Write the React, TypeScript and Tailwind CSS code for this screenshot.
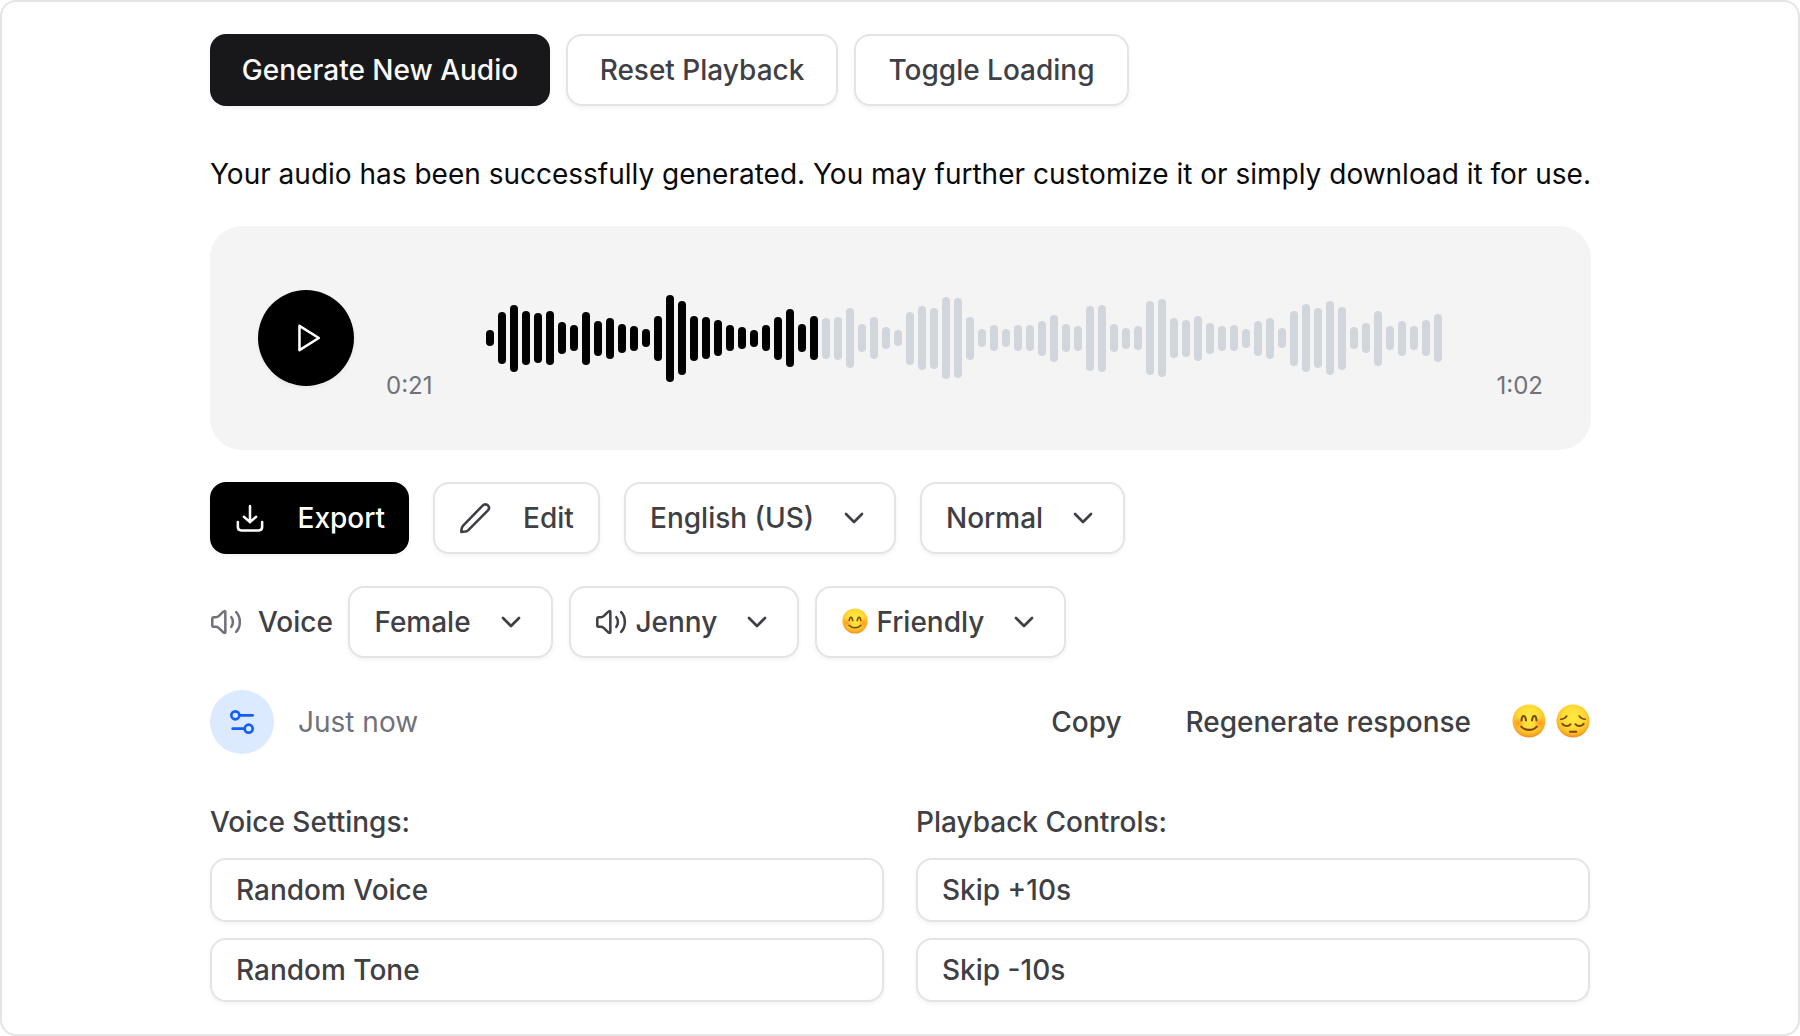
import React from "react";

const BARS: [number, number][] = [
  [50, 16], [32, 52], [25, 67], [31, 54], [33, 50], [31, 54], [42, 32], [45, 26], [32, 53], [41, 35],
  [38, 41], [44, 29], [46, 25], [49, 18], [36, 45], [15, 87], [21, 74], [36, 45], [37, 42], [40, 36],
  [45, 26], [47, 22], [50, 17], [45, 26], [37, 43], [29, 58], [44, 28], [36, 44], [38, 41], [37, 43],
  [28, 60], [44, 28], [37, 42], [47, 22], [50, 16], [32, 53], [26, 64], [28, 61], [17, 82], [18, 80],
  [37, 43], [49, 18], [45, 26], [49, 18], [45, 26], [45, 26], [41, 35], [35, 47], [44, 28], [46, 25],
  [26, 65], [25, 67], [44, 28], [48, 21], [46, 24], [21, 74], [19, 78], [38, 40], [40, 37], [36, 45],
  [43, 31], [46, 25], [45, 26], [49, 19], [41, 35], [38, 41], [48, 20], [31, 55], [24, 68], [28, 60],
  [21, 74], [27, 63], [47, 22], [43, 30], [31, 55], [46, 24], [41, 35], [46, 24], [40, 36], [34, 48],
];
const PLAYED = 28;

function Waveform() {
  return (
    <svg width="956" height="116" viewBox="0 0 956 116" className="block shrink-0">
      {BARS.map(([y, h], i) => (
        <rect key={i} x={i * 12} y={y} width="8" height={h} rx="4" fill={i < PLAYED ? "#000000" : "#d1d5dc"} />
      ))}
    </svg>
  );
}

type IconProps = { className?: string; stroke?: number; children: React.ReactNode };

function Icon({ className = "", stroke = 1.9, children }: IconProps) {
  return (
    <svg
      width="32"
      height="32"
      viewBox="0 0 24 24"
      fill="none"
      stroke="currentColor"
      strokeWidth={stroke}
      strokeLinecap="round"
      strokeLinejoin="round"
      className={"block shrink-0 " + className}
    >
      {children}
    </svg>
  );
}

function Volume({ className = "" }: { className?: string }) {
  return (
    <Icon className={className}>
      <path d="M1.7 9.8C1.7 8.9 2.2 8.4 2.9 8.4H4.3C5.2 8.4 5.8 8.2 6.5 7.6L9.2 5C10.2 4 11.5 3.1 11.5 4.7V19.3C11.5 20.9 10.2 20 9.2 19L6.5 16.4C5.8 15.8 5.2 15.6 4.3 15.6H2.9C2.2 15.6 1.7 15.1 1.7 14.2Z" />
      <path d="M16 8.4C17.6 10.4 17.6 13.6 16 15.6" />
      <path d="M19.6 4.6C23.3 8.4 23.3 15.6 19.6 19.4" />
    </Icon>
  );
}

function Chevron() {
  return (
    <Icon stroke={2} className="ml-6">
      <path d="M6 9L12 15L18 9" />
    </Icon>
  );
}

function Emoji({ size, sad = false }: { size: number; sad?: boolean }) {
  const id = (sad ? "sad" : "happy") + size;
  return (
    <svg width={size} height={size} viewBox="0 0 34 34" className="block shrink-0" fill="none" strokeLinecap="round">
      <defs>
        <radialGradient id={id} cx="0.5" cy="0.38" r="0.64">
          <stop offset="0" stopColor="#ffe93f" />
          <stop offset="0.5" stopColor="#ffdc38" />
          <stop offset="0.8" stopColor="#fcb825" />
          <stop offset="1" stopColor="#ea841a" />
        </radialGradient>
        <radialGradient id={id + "c"}>
          <stop offset="0" stopColor="#ff7a1a" stopOpacity="0.65" />
          <stop offset="1" stopColor="#ff7a1a" stopOpacity="0" />
        </radialGradient>
      </defs>
      <circle cx="17" cy="17" r="16.5" fill={"url(#" + id + ")"} />
      {sad ? (
        <g stroke="#7a4a0c" strokeWidth="1.6">
          <path d="M4.7 15.2C7.5 15 9.6 13.7 10.8 12" />
          <path d="M29.3 15.2C26.5 15 24.4 13.7 23.2 12" />
          <path d="M6.3 19.8C8 22.8 12.6 22.8 14.6 20.2" strokeWidth="2" />
          <path d="M27.7 19.8C26 22.8 21.4 22.8 19.4 20.2" strokeWidth="2" />
          <path d="M14 27.8H20.3" strokeWidth="2" />
        </g>
      ) : (
        <g>
          <circle cx="6.5" cy="19" r="6" fill={"url(#" + id + "c)"} />
          <circle cx="27.5" cy="19" r="6" fill={"url(#" + id + "c)"} />
          <g stroke="#7a4a0c" strokeWidth="2.1">
            <path d="M9.5 16.4C10 10.6 13.2 10.6 14 16.4" />
            <path d="M20 16.4C20.8 10.6 24 10.6 24.5 16.4" />
            <path d="M9.2 22.6C13 27 21 27 24.8 22.6" />
          </g>
        </g>
      )}
    </svg>
  );
}

const OUTLINE = "flex items-center border-2 border-[#e4e4e4] bg-white shadow-[0_2px_4px_rgba(0,0,0,0.05)]";

function Select({ width, children }: { width: string; children: React.ReactNode }) {
  return <button className={OUTLINE + " h-[72px] rounded-[16px] pl-6 " + width}>{children}<Chevron /></button>;
}

function Setting({ title, items }: { title: string; items: string[] }) {
  return (
    <section className="flex w-[674px] flex-col gap-4">
      <h3 className="h-10 font-medium">{title}</h3>
      {items.map((t) => (
        <button key={t} className={OUTLINE + " h-16 rounded-[16px] px-6"}>{t}</button>
      ))}
    </section>
  );
}

export default function App() {
  return (
    <main className="h-[1036px] w-[1800px] overflow-hidden rounded-[16px] border-2 border-[#e4e4e4] bg-white pt-8 pr-[207px] pl-[208px] font-['Inter',sans-serif] text-[28px] leading-10 font-medium whitespace-nowrap text-[#3f3f46] [font-variation-settings:'opsz'_14]">
      <div className="flex gap-4">
        <button className="h-[72px] w-[340px] rounded-[16px] bg-[#18181b] text-[#fafafa] shadow-[0_2px_4px_rgba(0,0,0,0.05)]">Generate New Audio</button>
        <button className={OUTLINE + " h-[72px] w-[272px] justify-center rounded-[16px]"}>Reset Playback</button>
        <button className={OUTLINE + " h-[72px] w-[275px] justify-center rounded-[16px]"}>Toggle Loading</button>
      </div>

      <p className="mt-12 font-normal text-[#09090b]">Your audio has been successfully generated. You may further customize it or simply download it for use.</p>

      <div className="mt-8 flex h-56 items-center rounded-[32px] bg-[#f4f4f4] px-12">
        <button className="flex size-24 shrink-0 items-center justify-center rounded-full bg-black text-white shadow-[0_2px_4px_rgba(0,0,0,0.05)]">
          <Icon><path d="M7.1 2.9L21.6 12L7.1 21.1Z" /></Icon>
        </button>
        <span className="mt-24 ml-8 w-[100px] text-2xl font-normal text-[#71717a]">0:21</span>
        <Waveform />
        <span className="mt-24 ml-auto text-2xl font-normal text-[#71717a]">1:02</span>
      </div>

      <div className="mt-8 flex gap-6">
        <button className="flex h-[72px] w-[199px] items-center rounded-[16px] bg-black pl-6 text-white shadow-[0_2px_4px_rgba(0,0,0,0.05)]">
          <Icon>
            <path d="M12 15.1V3.1M12 15.1L7.4 11.1M12 15.1L16.6 11.1" />
            <path d="M2.9 15V18.8C2.9 20.6 3.6 21.3 5.4 21.3H18.6C20.4 21.3 21.1 20.6 21.1 18.8V15" />
          </Icon>
          <span className="ml-[31.5px]">Export</span>
        </button>
        <button className={OUTLINE + " h-[72px] w-[167px] rounded-[16px] pl-6"}>
          <Icon>
            <path d="M3.3 17.5L17.7 2.7C18.9 1.5 20.7 1.5 21.7 2.6C22.7 3.7 22.7 5.3 21.5 6.5L7 21.1C6.3 21.8 5.7 22 4.9 22.1L1.7 22.4L2 19.9C2.2 18.9 2.5 18.3 3.3 17.5Z" />
          </Icon>
          <span className="ml-8">Edit</span>
        </button>
        <Select width="w-[272px]">English (US)</Select>
        <Select width="w-[205px]">Normal</Select>
      </div>

      <div className="mt-8 flex items-center gap-4">
        <Volume className="text-[#71717a]" />
        <span className="w-[74.4px]">Voice</span>
        <Select width="w-[205px]">Female</Select>
        <Select width="w-[230px]"><Volume className="mr-2" />Jenny</Select>
        <Select width="w-[251px]"><span className="mr-2 mb-0.5 ml-px"><Emoji size={26} /></span>Friendly</Select>
      </div>

      <div className="mt-8 flex h-16 items-center">
        <div className="flex size-16 items-center justify-center rounded-full bg-[#dbeafe] text-[#155dfc]">
          <Icon stroke={2}>
            <circle cx="7" cy="7" r="3" />
            <circle cx="17" cy="17" r="3" />
            <path d="M10 7H20M14 17H5" />
          </Icon>
        </div>
        <span className="ml-6 font-normal text-[#71717a]">Just now</span>
        <button className="ml-auto">Copy</button>
        <button className="ml-16">Regenerate response</button>
        <div className="mr-px mb-0.5 ml-[41px] flex gap-2.5"><Emoji size={34} /><Emoji size={34} sad /></div>
      </div>

      <div className="mt-12 flex gap-8">
        <Setting title="Voice Settings:" items={["Random Voice", "Random Tone"]} />
        <Setting title="Playback Controls:" items={["Skip +10s", "Skip -10s"]} />
      </div>
    </main>
  );
}
